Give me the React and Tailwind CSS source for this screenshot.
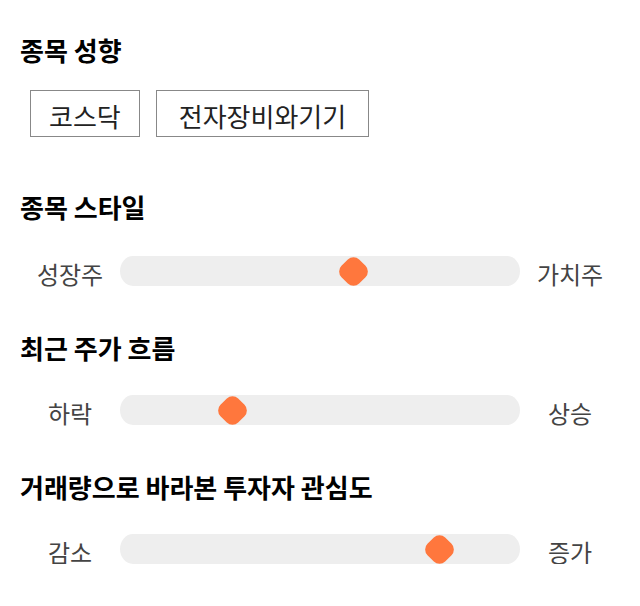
import React from 'react';

const sliders = [
  { title: '종목 스타일', left: '성장주', right: '가치주', pos: 233 },
  { title: '최근 주가 흐름', left: '하락', right: '상승', pos: 112 },
  { title: '거래량으로 바라본 투자자 관심도', left: '감소', right: '증가', pos: 319 },
];

const Heading = ({ children, className = '' }) => (
  <h2 className={`h-[32px] flex items-center text-[26px] font-bold text-black ${className}`}>
    {children}
  </h2>
);

const Slider = ({ left, right, pos }) => (
  <div className="flex items-center h-[30px]">
    <div className="w-[100px] text-center text-[24px] leading-[30px] text-[#444] pt-[6px]">{left}</div>
    <div className="relative w-[400px] h-[30px] bg-[#eeeeee] rounded-[13px_/_15px]">
      <div
        className="absolute top-0 w-[30px] h-[30px] flex items-center justify-center -translate-x-1/2"
        style={{ left: pos }}
      >
        <div className="w-[25px] h-[25px] bg-[#ff773d] rotate-45 rounded-[8px]" />
      </div>
    </div>
    <div className="w-[100px] text-center text-[24px] leading-[30px] text-[#444] pt-[6px]">{right}</div>
  </div>
);

export default function App() {
  return (
    <div
      className="w-[640px] bg-white px-[20px] pt-[33px]"
      style={{ fontFamily: '"Noto Sans CJK KR", "Noto Sans", sans-serif' }}
    >
      <Heading>종목 성향</Heading>
      <div className="flex gap-[16px] ml-[10px] mt-[25px]">
        <div className="h-[47px] px-[18px] pt-[3px] border border-[#888] flex items-center text-[26px] text-[#222]">코스닥</div>
        <div className="h-[47px] px-[22px] pt-[3px] border border-[#888] flex items-center text-[26px] text-[#222]">전자장비와기기</div>
      </div>

      {sliders.map((s, i) => (
        <div key={s.title} className={i === 0 ? 'mt-[53px]' : 'mt-[45px]'}>
          <Heading>{s.title}</Heading>
          <div className={i === 0 ? 'mt-[34px]' : 'mt-[32px]'}>
            <Slider left={s.left} right={s.right} pos={s.pos} />
          </div>
        </div>
      ))}
    </div>
  );
}
